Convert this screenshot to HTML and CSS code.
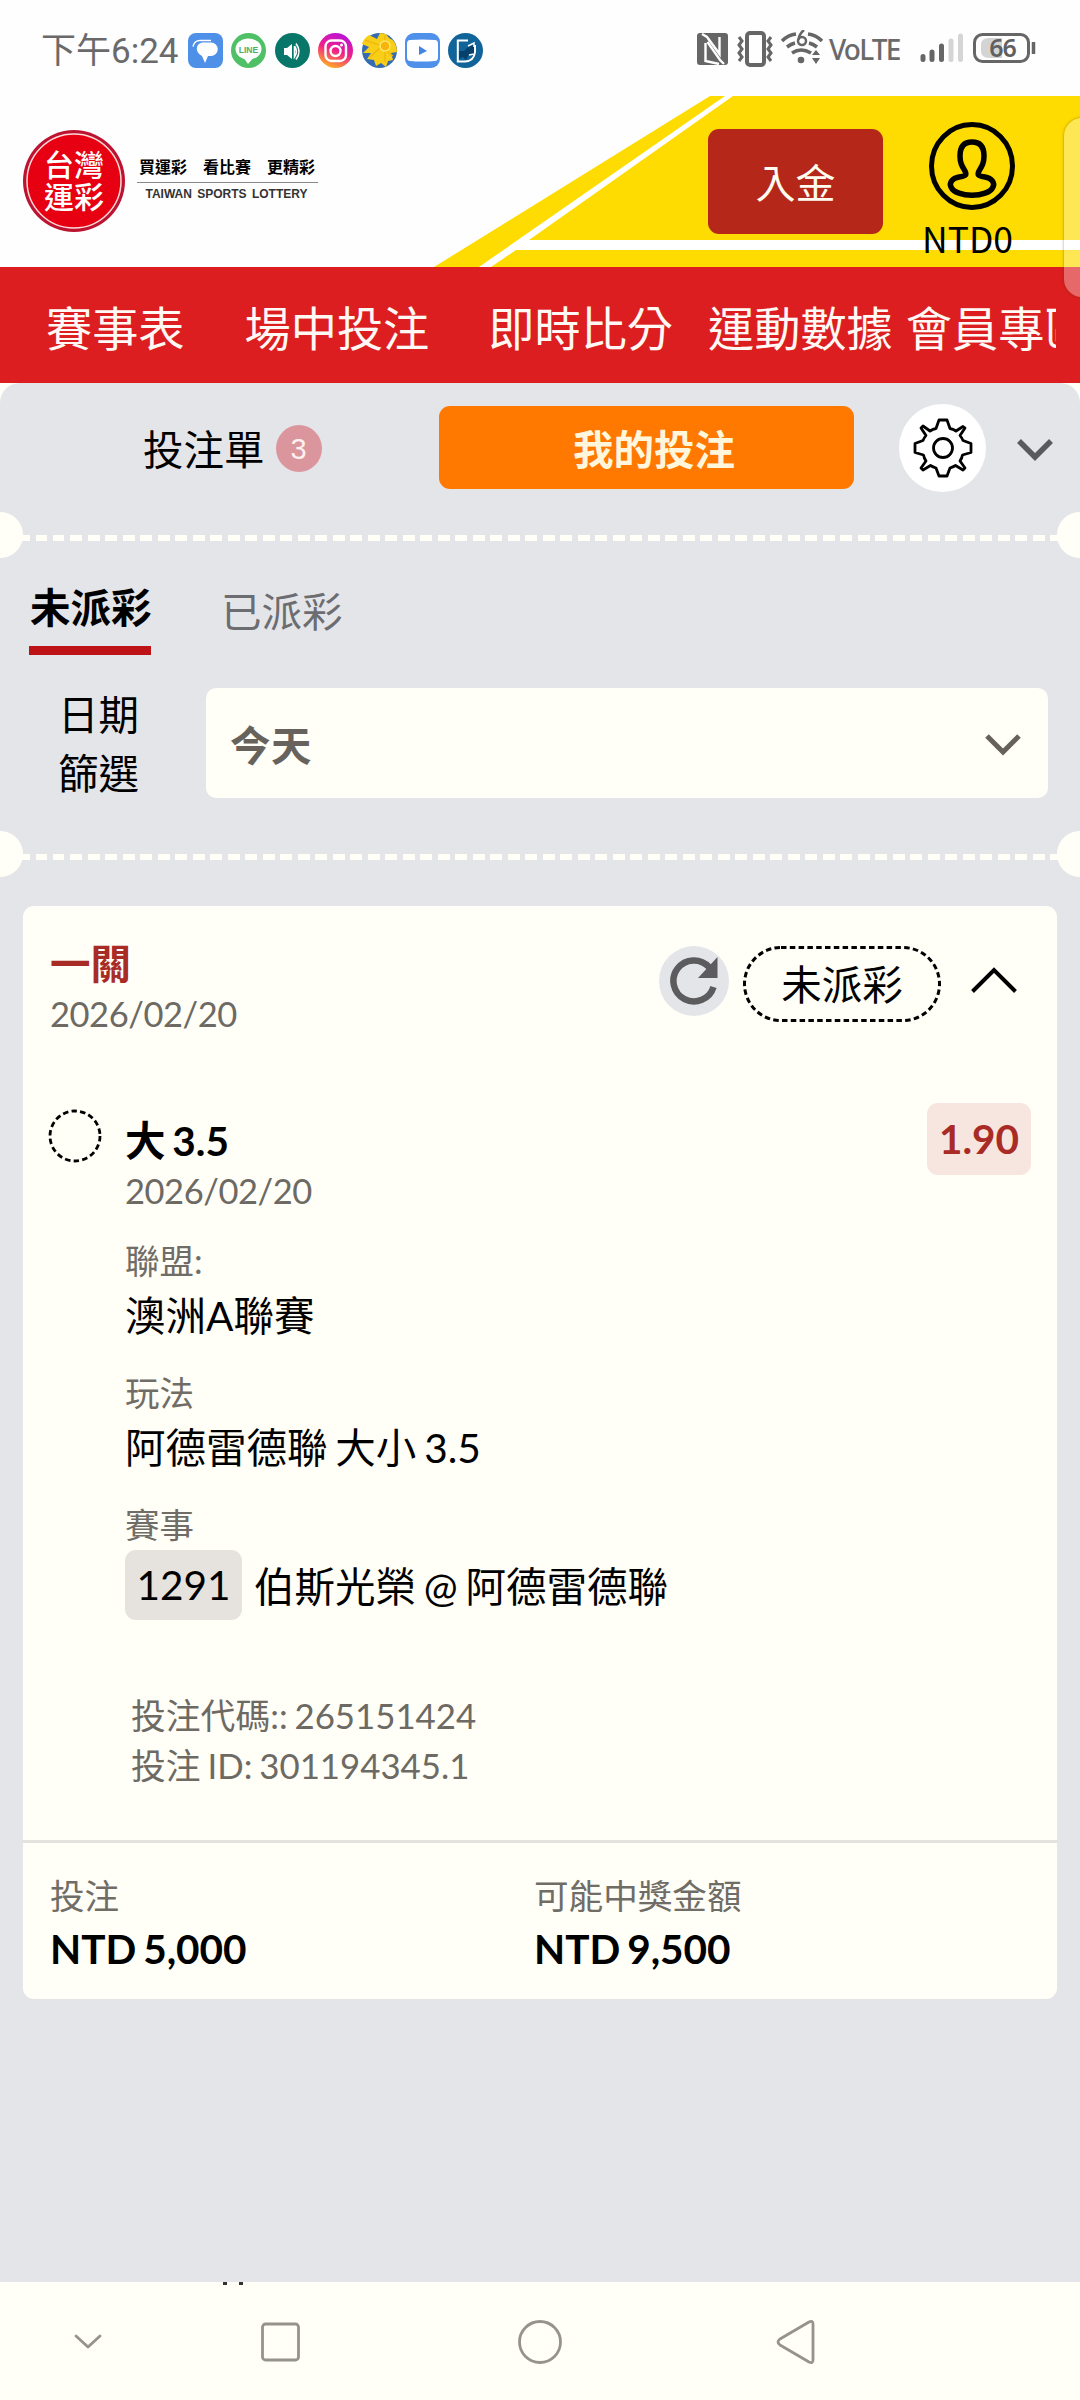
FILE: index.html
```html
<!DOCTYPE html>
<html lang="zh-Hant">
<head>
<meta charset="utf-8">
<title>台灣運彩</title>
<link rel="stylesheet" href="styles.css">
</head>
<body>
<div class="statusbar">
  <span class="clock">下午6:24</span>
  <div class="apps">
    <svg width="35" height="35" viewBox="0 0 35 35"><rect width="35" height="35" rx="8" fill="#4e8fe8"/><path d="M14 9.500H23a6.500 6.500 0 0 1 0 13.500H20l-3 7-3-7C7 20 7 11 14 9.500z" fill="#fff"/><path d="M5 13.500C6 9 9 7.500 12 7.500H23" fill="none" stroke="#fff" stroke-width="1.500"/></svg>
    <svg width="35" height="35" viewBox="0 0 35 35"><circle cx="17.500" cy="17.500" r="17.500" fill="#4fc066"/><ellipse cx="17.500" cy="16" rx="13" ry="10.500" fill="#fff"/><path d="M12 24h11l-6 7z" fill="#fff"/><text x="17.500" y="20" class="line-mark">LINE</text></svg>
    <svg width="35" height="35" viewBox="0 0 35 35"><circle cx="17.500" cy="17.500" r="17.500" fill="#08776a"/><path d="M9 15h3l5-4v15l-5-4H9z" fill="#fff"/><path d="M19.500 13v11q4-5.500 0-11M21 10.500q6 8 0 16" fill="none" stroke="#fff" stroke-width="1.600"/></svg>
    <svg width="35" height="35" viewBox="0 0 35 35"><defs><linearGradient id="ig" x1=".7" y1="0" x2=".3" y2="1"><stop offset="0" stop-color="#b512dc"/><stop offset=".5" stop-color="#f0208a"/><stop offset="1" stop-color="#ffb41c"/></linearGradient></defs><circle cx="17.500" cy="17.500" r="17.500" fill="url(#ig)"/><g fill="none" stroke="#fff" stroke-width="2.400"><rect x="7.500" y="7.500" width="20.500" height="20.500" rx="6"/><circle cx="17.500" cy="18" r="5"/></g><circle cx="23.500" cy="12" r="1.500" fill="#fff"/></svg>
    <svg width="35" height="35" viewBox="0 0 35 35"><circle cx="17.500" cy="17.500" r="17.500" fill="#356bb3"/><path d="M0 11Q1 6 7 2L15 6 18 0 24 1 27 5Q35 8 35 19L29 20 31 27 26 28 24 34 19 30 14 33 12 27 5 26 9 20 1 20 7 14z" fill="#f8ce16"/><path d="M3 7l17 6M8 24l12-11M23 2v27M20 14l11 9" stroke="#eeb310" stroke-width="1.200"/><circle cx="23" cy="13" r="5" fill="#f5b50d" stroke="#ffe665" stroke-width="1.500"/></svg>
    <svg width="35" height="35" viewBox="0 0 35 35"><rect width="35" height="35" rx="9" fill="#4e90ea"/><path d="M5 7Q17 6 30 7Q33 7 33 11V24Q33 28 30 28Q17 29 5 28Q2 28 2 24V11Q2 7 5 7z" fill="#fff"/><path d="M14 13l8 5-8 4z" fill="#4383e1"/></svg>
    <svg width="35" height="35" viewBox="0 0 35 35"><circle cx="17.500" cy="17.500" r="17.500" fill="#116499"/><path d="M20 7.500H9.800V28.500H17Q26 28 27 19V12" fill="none" stroke="#fff" stroke-width="2"/><path d="M11 18h5l4-4 6-2v9h-5l-3 6-3-3-4 2z" fill="#06406c"/><path d="M20 13l6-3v4M21 22l5-1" fill="none" stroke="#fff" stroke-width="1.500"/></svg>
  </div>
  <div class="signals">
    <svg width="31" height="32" viewBox="0 0 31 32"><rect width="31" height="32" rx="3" fill="#666"/><path d="M5 1L10 4 22.500 21V4M8.500 10V28L22 31" fill="none" stroke="#fff" stroke-width="2.400"/><path d="M10.500 9L23 27 27 31" fill="none" stroke="#fff" stroke-width="2.400"/></svg>
    <svg class="vibrate" width="37" height="36" viewBox="0 0 37 36" fill="none" stroke="#666"><rect x="10" y="2" width="17" height="32" rx="3" stroke-width="4"/><path d="M2 6l3 4-3 4 3 4-3 4 3 4-3 4M34 6l-3 4 3 4-3 4 3 4-3 4 3 4" stroke-width="3"/></svg>
    <svg class="wifi" width="42" height="36" viewBox="0 0 42 36"><g fill="none" stroke="#666" stroke-width="3.500"><path d="M1 11Q7 5 15 4M27 4Q35 5 41 11M6 17Q10 14 14 13M28 13Q32 14 36 17M11 23Q20 17 30 23"/></g><circle cx="20" cy="30" r="3.300" fill="#666"/><path d="M35 20l4 5h-8zM31 28h8l-4 6z" fill="#666"/><circle cx="21" cy="11" r="4" fill="none" stroke="#666" stroke-width="2.500"/><path d="M17.500 10Q18 4 23 0" fill="none" stroke="#666" stroke-width="2.500"/></svg>
    <span class="volte">VoLTE</span>
    <svg class="bars" width="44" height="30" viewBox="0 0 44 30" stroke-width="5" stroke-linecap="round"><path d="M3 23.500V26.500M12 19V26.500M21.500 13V26.500" stroke="#666"/><path d="M31 8V26.500M40.500 3V26.500" stroke="#d5d5d5"/></svg>
    <svg class="battery" width="64" height="30" viewBox="0 0 64 30"><path d="M16 5H29V25H16Q8 25 8 18V12Q8 5 16 5" fill="#d4d4d4"/><rect x="1.500" y="1.500" width="54" height="27" rx="8" fill="none" stroke="#666" stroke-width="3"/><path d="M60.500 9V21" stroke="#666" stroke-width="3.500"/><text x="29.500" y="23.500" class="percent">66</text></svg>
  </div>
</div>

<header class="masthead">
  <svg class="masthead-art" width="1080" height="171" viewBox="0 0 1080 171"><path d="M710 0H1080V171H434z" fill="#fedc02"/><path d="M725 0H733L529 144H1080V154H516L491 171H479z" fill="#fff"/></svg>
  <div class="brand">
    <svg width="102" height="102" viewBox="0 0 102 102"><circle cx="51" cy="51" r="51" fill="#bc1430"/><circle cx="51" cy="51" r="47" fill="#e60012" stroke="#ffd9d9" stroke-width="1.500"/><g class="seal"><text x="51" y="46">台灣</text><text x="51" y="77.500">運彩</text></g></svg>
    <div class="slogan"><span class="slogan-zh">買運彩　看比賽　更精彩</span><span class="slogan-en">TAIWAN SPORTS LOTTERY</span></div>
  </div>
  <div class="account">
    <button class="deposit">入金</button>
    <div class="user">
      <svg width="88" height="90" viewBox="0 0 88 90" fill="none" stroke="#000"><ellipse cx="44" cy="45" rx="40.500" ry="41.500" stroke-width="5"/><path d="M44 21C34 21 32 28 32 35C32 42 34 45 37 50C39 54 38 55 31 56C24 57 21 62 23 66C28 77 60 77 65 66C67 62 64 57 57 56C50 55 49 54 51 50C54 45 56 42 56 35C56 28 54 21 44 21z" stroke-width="5.500"/></svg>
      <span class="balance">NTD0</span>
    </div>
  </div>
  <div class="edge-handle"></div>
</header>

<nav class="mainnav"><div class="mainnav-track"><span class="n1">賽事表</span><span class="n2">場中投注</span><span class="n3">即時比分</span><span class="n4">運動數據</span><span>會員專區</span></div></nav>

<main class="slip">
  <div class="slip-tabs">
    <div class="slip-tab">投注單<span class="count">3</span></div>
    <div class="slip-tab slip-tab-active">我的投注</div>
    <div class="gear"><svg width="60" height="60" viewBox="-30 -30 60 60" fill="none" stroke="#000" stroke-width="2.800" stroke-linejoin="round"><circle r="9.500"/><path d="M-4-28H4L7-19.500Q10-19 13-17L20-21.500 22-20 17-12.500Q19-10 20-7.500L28-4.500V4.500L19.500 7Q19 10 17 13L22 20 20 22 12.500 17.500Q10 19 7 20L4 28H-4L-7 20Q-10 19-12.500 17.500L-20 22-22 20-17 13Q-19 10-19.500 7L-28 4.500V-4.500L-20-7.500Q-19-10-17-12.500L-22-20-20-22-13-17Q-10-19-7-19.500z"/></svg></div>
    <svg class="collapse" width="36" height="22" viewBox="0 0 36 22" fill="none" stroke="#595a5d" stroke-width="5.500"><path d="M2 2L18 18 34 2"/></svg>
  </div>
  <div class="perforation"></div>
  <div class="status-tabs"><span class="status-tab status-tab-active">未派彩</span><span class="status-tab">已派彩</span></div>
  <div class="filter">
    <label>日期<br>篩選</label>
    <div class="select"><span>今天</span><svg width="36" height="22" viewBox="0 0 36 22" fill="none" stroke="#66625b" stroke-width="5"><path d="M2 2L18 18 34 2"/></svg></div>
  </div>
  <div class="perforation"></div>

  <article class="bet">
    <div class="bet-head">
      <div class="bet-title"><strong>一關</strong><span class="date">2026/02/20</span></div>
      <div class="bet-actions">
        <div class="refresh"><svg width="48" height="48" viewBox="0 0 48 48"><path d="M43.500 30A20.500 20.500 0 1 1 39 10" fill="none" stroke="#5c5c5e" stroke-width="6.500"/><path d="M47.500 0V21H28z" fill="#5c5c5e"/></svg></div>
        <div class="state"><svg class="state-ring" width="198" height="76"><rect x="1.500" y="1.500" width="195" height="73" rx="36.500" fill="none" stroke="#000" stroke-width="3" stroke-dasharray="5.500 3.300"/></svg>未派彩</div>
        <svg class="fold" width="46" height="26" viewBox="0 0 46 26" fill="none" stroke="#000" stroke-width="4"><path d="M1.500 24.500L23 3 44.500 24.500"/></svg>
      </div>
    </div>
    <div class="leg">
      <svg class="leg-mark" width="54" height="54"><circle cx="27" cy="27" r="25" fill="none" stroke="#000" stroke-width="2.800" stroke-dasharray="5.500 3.230"/></svg>
      <div class="leg-body">
        <div class="pick">大 3.5</div>
        <div class="date">2026/02/20</div>
        <dl>
          <dt>聯盟:</dt><dd>澳洲A聯賽</dd>
          <dt>玩法</dt><dd>阿德雷德聯 大小 3.5</dd>
          <dt>賽事</dt><dd class="match"><span class="match-no">1291</span>伯斯光榮 @ 阿德雷德聯</dd>
        </dl>
        <div class="ids"><div>投注代碼:: 265151424</div><div>投注 ID: 301194345.1</div></div>
      </div>
      <div class="odds">1.90</div>
    </div>
    <div class="bet-foot">
      <div><span>投注</span><strong>NTD 5,000</strong></div>
      <div><span>可能中獎金額</span><strong>NTD 9,500</strong></div>
    </div>
  </article>
</main>

<footer class="sysnav">
  <svg width="1080" height="118" viewBox="0 0 1080 118" fill="none" stroke="#96938c" stroke-width="2.800" stroke-linejoin="round" stroke-linecap="round"><path d="M223 0h4v3h-4zM239 0h4v3h-4z" fill="#333" stroke="none"/><path d="M76 54L88 65 100 54"/><rect x="262.500" y="42" width="36" height="36" rx="3"/><circle cx="540" cy="60" r="20.500"/><path d="M780 57L809 40Q813 38 813 42V78Q813 82 809 80L780 63Q776 60 780 57z"/></svg>
</footer>
</body>
</html>
```

FILE: styles.css
```css
* { box-sizing: border-box; }
body { margin: 0; width: 1080px; height: 2400px; overflow: hidden; display: flex; flex-direction: column; background: #fffef7; color: #000; font-family: Lato, "Noto Sans CJK TC", sans-serif; font-size: 40.5px; }
svg { display: block; flex: none; }

.statusbar { height: 96px; flex: none; background: #fefefe; display: flex; padding-left: 41px; color: #6a6a6a; font-family: Roboto, "Noto Sans CJK TC", sans-serif; }
.clock { width: 147px; padding-top: 31px; font-size: 35px; line-height: 42px; font-weight: 400; white-space: nowrap; }
.apps { display: flex; gap: 8.400px; padding-top: 33px; }
.line-mark { font: bold 8.500px "Liberation Sans", sans-serif; fill: #4fae60; text-anchor: middle; }
.signals { margin-left: auto; width: 383px; display: flex; align-items: flex-start; padding-top: 33px; }
.vibrate { margin: -2px 0 0 9px; }
.wifi { margin: -3px 0 0 7px; }
.volte { width: 97px; padding: 0 0 0 6px; font: 500 28px/32px "Noto Sans", sans-serif; letter-spacing: -1.800px; white-space: nowrap; }
.bars { width: 44px; }
.battery { margin-left: 9px; }
.percent { font: 600 25px "Noto Sans", sans-serif; fill: #606060; text-anchor: middle; letter-spacing: -1px; }

.masthead { position: relative; height: 171px; flex: none; background: #fefefe; display: flex; justify-content: space-between; }
.masthead-art { position: absolute; left: 0; top: 0; }
.brand { position: relative; display: flex; padding: 34px 0 0 23px; }
.seal text { font: 500 30px "Noto Sans CJK TC", sans-serif; fill: #fff; text-anchor: middle; }
.slogan { width: 181px; margin-left: 12px; padding-top: 25px; }
.slogan-zh { display: block; height: 28px; border-bottom: 1.500px solid #888; font: 700 16px/22px "Noto Sans CJK TC", sans-serif; padding-left: 2px; white-space: nowrap; }
.slogan-en { display: block; text-align: center; font: bold 12px/14px "Liberation Sans", sans-serif; color: #333; padding: 4px 2px 0 0; word-spacing: 2px; white-space: nowrap; }
.account { position: relative; display: flex; padding: 26px 66px 0 0; }
.deposit { width: 175px; height: 105px; margin-top: 7px; border: 0; padding: 0 0 1px; border-radius: 11px; background: #b52719; color: #fffcf0; font: 400 40px/50px "Noto Sans CJK TC", sans-serif; }
.user { width: 92px; margin-left: 39px; }
.user svg { margin-left: 6px; margin-top: -1px; }
.balance { display: block; font: 400 35.500px/50px "Noto Sans CJK TC", sans-serif; white-space: nowrap; padding-top: 2px; }
.edge-handle { position: absolute; z-index: 2; right: -20px; top: 22px; width: 36px; height: 179px; border-radius: 20px; background: rgba(255, 255, 255, .33); box-shadow: 0 0 3px rgba(90, 60, 0, .5); clip-path: inset(-4px 20px -4px -4px); }

.mainnav { height: 116px; flex: none; background: #dc1e20; color: #fff8f4; font: 400 46.200px/116px "Noto Sans CJK TC", sans-serif; padding: 0 24px 0 23px; }
.mainnav-track { display: flex; overflow: hidden; white-space: nowrap; padding-left: 23px; height: 116px; }
.mainnav-track span { flex: none; line-height: 117px; }
.n1 { margin-right: 60px; }
.n2 { margin-right: 59px; }
.n3 { margin-right: 35px; }
.n4 { margin-right: 13px; }

.slip { height: 1899px; flex: none; background: #e4e5e9; border-radius: 20px 20px 0 0; overflow: hidden; }
.slip-tabs { height: 129px; display: flex; padding-top: 21px; }
.slip-tab { width: 439px; height: 86px; padding: 0 0 0 143px; display: flex; align-items: center; }
.count { width: 46px; height: 47px; margin: 2px 0 0 11px; border-radius: 50%; background: #da969c; color: #fdf1f0; font: 29px/49px "Liberation Sans", sans-serif; text-align: center; }
.slip-tab-active { width: 415px; height: 83px; margin-top: 2px; padding: 0 0 1px 15px; justify-content: center; border-radius: 11px; background: #ff7900; color: #fff6dc; font-weight: 700; }
.gear { width: 87px; height: 88px; margin-left: 45px; border-radius: 50%; background: #fff; display: flex; align-items: center; justify-content: center; }
.collapse { margin: 35px 0 0 31px; }
.perforation { height: 46px; background: radial-gradient(circle at 0 23px, #fffef7 22.500px, transparent 23.500px), radial-gradient(circle at 1080px 23px, #fffef7 22.500px, transparent 23.500px), repeating-linear-gradient(90deg, #fffef7 0 11.500px, transparent 11.500px 17.500px) 18px 23px / 1042px 6px no-repeat; }
.status-tabs { height: 130px; display: flex; padding-left: 29px; white-space: nowrap; }
.status-tab { margin: 23px 0 0 70px; color: #6c6d70; line-height: 62px; height: 78px; }
.status-tab-active { width: 122px; height: 74px; margin: 23px 0 0; padding-left: 1px; line-height: 53px; color: #000; font-weight: 700; border-bottom: 9px solid #bd1216; }
.filter { height: 143px; display: flex; }
.filter label { width: 206px; padding: 0 67px 0 0; margin-top: -3px; text-align: right; line-height: 59px; }
.select { width: 842px; height: 110px; border-radius: 10px; background: #fffef7; color: #67635c; font-weight: 700; display: flex; align-items: center; justify-content: space-between; padding: 1px 27px 0 24px; }
.select span { letter-spacing: .5px; }
.select svg { margin-top: 3px; }

.bet { width: 1034px; height: 1093px; margin: 29px 23px 0; border-radius: 11px; background: #fffef7; word-spacing: -2.500px; }
.bet-head { height: 190px; padding: 38px 40px 0 27px; display: flex; justify-content: space-between; }
.bet-title strong { display: block; line-height: 40px; color: #a92b26; }
.date { display: block; font-size: 34.500px; line-height: 50px; letter-spacing: -.45px; color: #6d6963; }
.bet-title .date { padding-top: 5px; }
.bet-actions { display: flex; padding-top: 2px; }
.refresh { width: 70px; height: 70px; border-radius: 50%; background: #e4e5e9; display: flex; align-items: center; justify-content: center; }
.state { position: relative; width: 198px; height: 76px; margin-left: 14px; text-align: center; line-height: 78px; }
.state-ring { position: absolute; left: 0; top: 0; }
.fold { margin: 21px 0 0 30px; }
.leg { height: 744px; display: flex; padding: 7px 26px 0 25px; }
.leg-mark { margin-top: 6px; }
.leg-body { padding: 12px 0 0 23px; flex: 1; }
.pick { line-height: 52px; font-weight: 700; word-spacing: -3px; }
.leg-body .date { line-height: 48px; }
dl { margin: 21px 0 0; }
dt { font-size: 34.500px; line-height: 50px; color: #706c66; }
dd { margin: 0 0 22px; line-height: 60px; white-space: nowrap; }
.match { display: flex; height: 70px; line-height: 74px; }
.match-no { width: 117px; height: 70px; margin-right: 12px; line-height: 70px; text-align: center; border-radius: 11px; background: #e6e2dd; }
.ids { padding: 49px 0 0 6px; font-size: 34.800px; line-height: 50px; color: #6d6963; word-spacing: -2px; }
.odds { width: 104px; height: 72px; border-radius: 11px; background: #f7e5df; color: #a92b26; font-weight: 700; line-height: 72px; text-align: center; }
.bet-foot { height: 159px; border-top: 3px solid #e3e2dd; display: flex; padding: 28px 27px 0; }
.bet-foot div { width: 484px; }
.bet-foot span { display: block; font-size: 34.600px; line-height: 50px; color: #706c66; }
.bet-foot strong { display: block; line-height: 56px; word-spacing: -3px; }

.sysnav { height: 118px; flex: none; background: #fffef7; }
```
